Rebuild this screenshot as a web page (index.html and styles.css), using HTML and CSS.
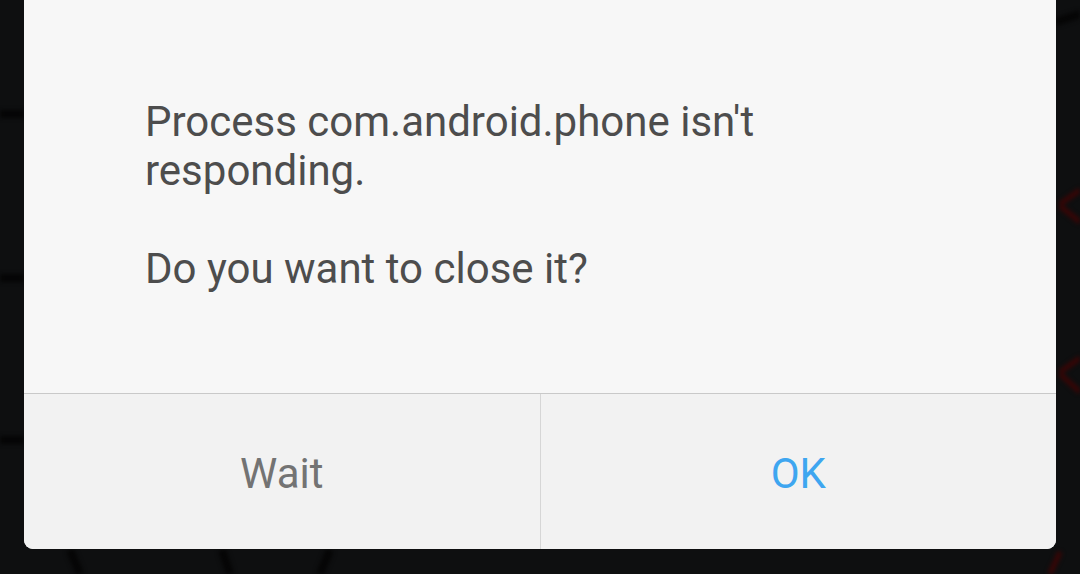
FILE: index.html
```html
<!DOCTYPE html>
<html lang="en">

<head>
    <meta charset="UTF-8">
    <meta name="viewport" content="width=device-width, initial-scale=1.0">
    <title>Process not responding</title>
    <link rel="stylesheet" href="styles.css">
</head>

<body>
    <!-- dark hex wallpaper behind the dialog -->
    <svg class="wallpaper" width="1080" height="574" viewBox="0 0 1080 574">
        <g stroke="#050505" stroke-width="8" fill="none">
            <path d="M0 114 L24 114" />
            <path d="M0 278 L24 278" />
            <path d="M0 440 L24 440" />
            <path d="M1056 22 L1080 14" />
            <path d="M80 574 L70 550" />
            <path d="M230 574 L222 550" />
            <path d="M320 574 L330 550" />
        </g>
        <g stroke="#3a0505" stroke-width="5" fill="none">
            <path d="M1060 204 L1080 190" />
            <path d="M1060 206 L1080 222" />
            <path d="M1060 372 L1080 358" />
            <path d="M1060 374 L1080 392" />
            <path d="M1050 574 L1060 552" />
        </g>
    </svg>

    <div class="backdrop">
        <div class="dialog">
            <div class="message">
                <p>Process com.android.phone isn't<br>responding.</p>
                <p>Do you want to close it?</p>
            </div>
            <div class="button-group">
                <button class="wait-btn">Wait</button>
                <button class="ok-btn">OK</button>
            </div>
        </div>
    </div>
</body>

</html>
```

FILE: styles.css
```css
html,
body {
    margin: 0;
    height: 100%;
}

body {
    font-family: Roboto, "Noto Sans", sans-serif;
    background-color: #0e0f10;
    overflow: hidden;
}

.wallpaper {
    position: absolute;
    top: 0;
    left: 0;
    filter: blur(2px);
}

.backdrop {
    position: relative;
    height: 100%;
    padding: 0 24px;
    box-sizing: border-box;
}

.dialog {
    height: 549px;
    display: flex;
    flex-direction: column;
    background-color: #f7f7f7;
    border-radius: 0 0 9px 9px;
    overflow: hidden;
}

.message {
    height: 394px;
    box-sizing: border-box;
    padding: 97px 0 0 121px;
    border-bottom: 1px solid #c9c9c9;
}

.message p {
    margin: 0 0 49px;
    font-size: 42px;
    line-height: 49px;
    color: #4d4d4d;
}

.button-group {
    flex: 1;
    display: flex;
    background-color: #f2f2f2;
}

.button-group button {
    flex: 1;
    border: none;
    background: none;
    font-family: Roboto, "Noto Sans", sans-serif;
    font-size: 42px;
    padding: 4px 0 0;
    cursor: pointer;
}

.wait-btn {
    color: #737373;
    border-right: 1px solid #d6d6d6 !important;
}

.ok-btn {
    color: #3ea6f0;
}
```
